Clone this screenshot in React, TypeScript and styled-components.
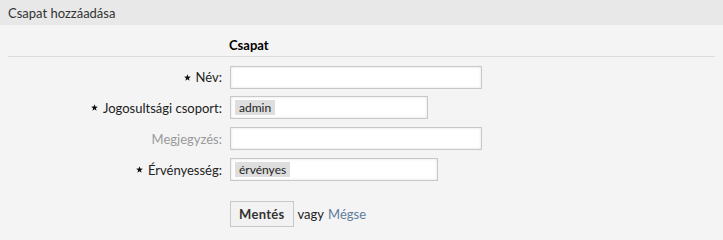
import React from "react";
import styled, { createGlobalStyle } from "styled-components";

const Global = createGlobalStyle`
  html, body { margin: 0; padding: 0; background: #f4f4f4; }
  body { font-family: "Lato", "Liberation Sans", sans-serif; color: #333; }
`;

const Page = styled.div`
  width: 723px;
  height: 239px;
  background: #f4f4f4;
  overflow: hidden;
`;

const Header = styled.div`
  height: 25px;
  background: #e8e8e8;
  display: flex;
  align-items: center;
  padding: 0 8px;
  font-size: 13px;
  color: #333;
`;

const Content = styled.div`
  padding: 0 8px;
`;

const Legend = styled.div`
  padding: 12px 0 3px 221px;
  line-height: 16px;
  font-size: 13px;
  font-weight: 700;
  color: #000;
  border-bottom: 1px solid #dcdcdc;
`;

const Form = styled.div`
  display: grid;
  grid-template-columns: 214px 1fr;
  column-gap: 8px;
  row-gap: 8px;
  padding-top: 9px;
  align-items: center;
`;

const Label = styled.label<{ $muted?: boolean }>`
  display: flex;
  justify-content: flex-end;
  align-items: center;
  gap: 5px;
  font-size: 13px;
  color: ${(p) => (p.$muted ? "#9a9a9a" : "#222")};
  white-space: nowrap;
`;

const Field = styled.div<{ $w: number; $tight?: boolean }>`
  width: ${(p) => p.$w}px;
  height: 23px;
  box-sizing: border-box;
  background: #fff;
  border: 1px solid #c8c8c8;
  box-shadow: inset 0 0 3px rgba(0, 0, 0, 0.12);
  display: flex;
  align-items: center;
  padding: 0 4px;
  margin-bottom: ${(p) => (p.$tight ? "-1px" : "0")};
`;

const Tag = styled.span`
  background: #dedede;
  font-size: 12px;
  color: #222;
  line-height: 15px;
  padding: 0 4px;
`;

const Actions = styled.div`
  display: flex;
  align-items: center;
  gap: 4px;
  margin-top: 12px;
  font-size: 13px;
  color: #222;
`;

const Button = styled.button`
  height: 26px;
  box-sizing: border-box;
  padding: 0 8px;
  background: #f2f2f2;
  border: 1px solid #c8c8c8;
  font-family: inherit;
  font-size: 13px;
  font-weight: 700;
  color: #333;
  letter-spacing: 0.3px;
`;

const Link = styled.a`
  color: #5d7d9d;
  text-decoration: none;
`;

const Star = () => (
  <svg width="7" height="7" viewBox="0 0 10 10" aria-hidden>
    <path d="M5 0.3 L6.2 3.7 L9.8 3.8 L7 6 L8 9.6 L5 7.5 L2 9.6 L3 6 L0.2 3.8 L3.8 3.7 Z" fill="#111" />
  </svg>
);

export default function App() {
  return (
    <Page>
      <Global />
      <Header>Csapat hozzáadása</Header>
      <Content>
        <Legend>Csapat</Legend>
        <Form>
          <Label>
            <Star />
            Név:
          </Label>
          <Field $w={252} $tight />
          <Label>
            <Star />
            Jogosultsági csoport:
          </Label>
          <Field $w={198}>
            <Tag>admin</Tag>
          </Field>
          <Label $muted>Megjegyzés:</Label>
          <Field $w={252} />
          <Label>
            <Star />
            Érvényesség:
          </Label>
          <Field $w={208}>
            <Tag>érvényes</Tag>
          </Field>
          <span />
          <Actions>
            <Button>Mentés</Button>
            vagy <Link href="#">Mégse</Link>
          </Actions>
        </Form>
      </Content>
    </Page>
  );
}
